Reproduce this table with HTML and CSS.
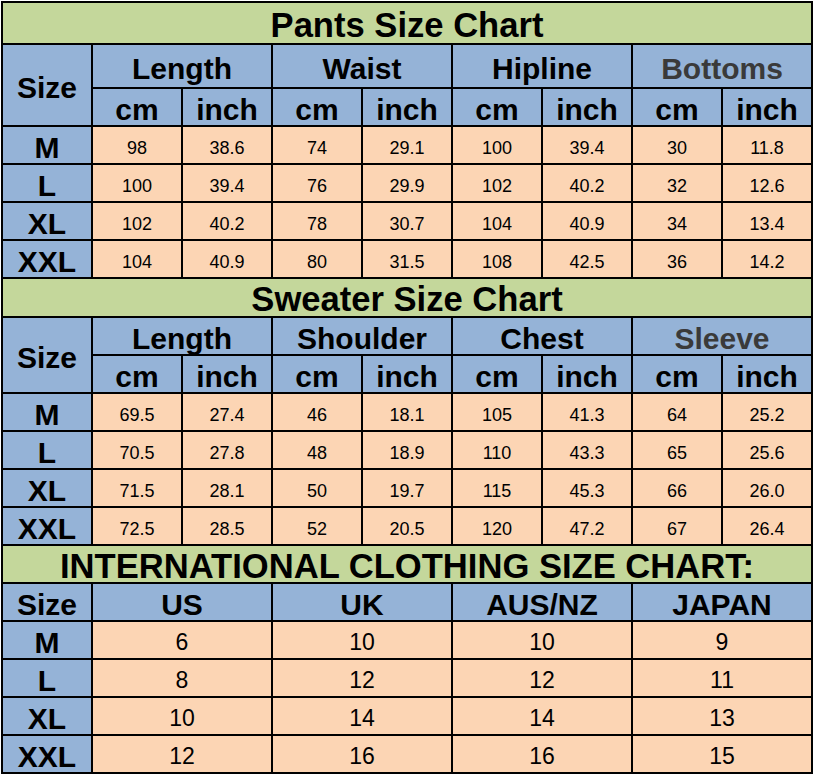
FILE: index.html
```html
<!DOCTYPE html>
<html>
<head>
<meta charset="utf-8">
<link rel="stylesheet" href="styles.css">
<title>Size Chart</title>
</head>
<body>
<div class="chart">
  <div class="c title">Pants Size Chart</div>
  <div class="c hd r2">Size</div>
  <div class="c hd s2">Length</div>
  <div class="c hd s2">Waist</div>
  <div class="c hd s2">Hipline</div>
  <div class="c hd s2 grey">Bottoms</div>
  <div class="c hd">cm</div><div class="c hd">inch</div>
  <div class="c hd">cm</div><div class="c hd">inch</div>
  <div class="c hd">cm</div><div class="c hd">inch</div>
  <div class="c hd">cm</div><div class="c hd">inch</div>

  <div class="c hd">M</div><div class="c d">98</div><div class="c d">38.6</div><div class="c d">74</div><div class="c d">29.1</div><div class="c d">100</div><div class="c d">39.4</div><div class="c d">30</div><div class="c d">11.8</div>
  <div class="c hd">L</div><div class="c d">100</div><div class="c d">39.4</div><div class="c d">76</div><div class="c d">29.9</div><div class="c d">102</div><div class="c d">40.2</div><div class="c d">32</div><div class="c d">12.6</div>
  <div class="c hd">XL</div><div class="c d">102</div><div class="c d">40.2</div><div class="c d">78</div><div class="c d">30.7</div><div class="c d">104</div><div class="c d">40.9</div><div class="c d">34</div><div class="c d">13.4</div>
  <div class="c hd">XXL</div><div class="c d">104</div><div class="c d">40.9</div><div class="c d">80</div><div class="c d">31.5</div><div class="c d">108</div><div class="c d">42.5</div><div class="c d">36</div><div class="c d">14.2</div>

  <div class="c title">Sweater Size Chart</div>
  <div class="c hd r2">Size</div>
  <div class="c hd s2">Length</div>
  <div class="c hd s2">Shoulder</div>
  <div class="c hd s2">Chest</div>
  <div class="c hd s2 grey">Sleeve</div>
  <div class="c hd">cm</div><div class="c hd">inch</div>
  <div class="c hd">cm</div><div class="c hd">inch</div>
  <div class="c hd">cm</div><div class="c hd">inch</div>
  <div class="c hd">cm</div><div class="c hd">inch</div>

  <div class="c hd">M</div><div class="c d">69.5</div><div class="c d">27.4</div><div class="c d">46</div><div class="c d">18.1</div><div class="c d">105</div><div class="c d">41.3</div><div class="c d">64</div><div class="c d">25.2</div>
  <div class="c hd">L</div><div class="c d">70.5</div><div class="c d">27.8</div><div class="c d">48</div><div class="c d">18.9</div><div class="c d">110</div><div class="c d">43.3</div><div class="c d">65</div><div class="c d">25.6</div>
  <div class="c hd">XL</div><div class="c d">71.5</div><div class="c d">28.1</div><div class="c d">50</div><div class="c d">19.7</div><div class="c d">115</div><div class="c d">45.3</div><div class="c d">66</div><div class="c d">26.0</div>
  <div class="c hd">XXL</div><div class="c d">72.5</div><div class="c d">28.5</div><div class="c d">52</div><div class="c d">20.5</div><div class="c d">120</div><div class="c d">47.2</div><div class="c d">67</div><div class="c d">26.4</div>

  <div class="c title">INTERNATIONAL CLOTHING SIZE CHART:</div>
  <div class="c hd">Size</div>
  <div class="c hd s2">US</div>
  <div class="c hd s2">UK</div>
  <div class="c hd s2">AUS/NZ</div>
  <div class="c hd s2">JAPAN</div>

  <div class="c hd">M</div><div class="c d big s2">6</div><div class="c d big s2">10</div><div class="c d big s2">10</div><div class="c d big s2">9</div>
  <div class="c hd">L</div><div class="c d big s2">8</div><div class="c d big s2">12</div><div class="c d big s2">12</div><div class="c d big s2">11</div>
  <div class="c hd">XL</div><div class="c d big s2">10</div><div class="c d big s2">14</div><div class="c d big s2">14</div><div class="c d big s2">13</div>
  <div class="c hd">XXL</div><div class="c d big s2">12</div><div class="c d big s2">16</div><div class="c d big s2">16</div><div class="c d big s2">15</div>
</div>
</body>
</html>
```

FILE: styles.css
```css
html, body {
  margin: 0;
  padding: 0;
  background: #ffffff;
}
body {
  padding: 1px 0 0 1px;
  font-family: "Liberation Sans", Arial, sans-serif;
  color: #000;
}
.chart {
  display: grid;
  width: 812px;
  box-sizing: border-box;
  background: #000;
  padding: 2px;
  gap: 2px;
  grid-template-columns: repeat(9, 88px);
  grid-template-rows: 40px 42px 36px 36px 36px 36px 36px 37px 36px 36px 36px 36px 36px 36px 36px 36px 36px 36px 36px 36px;
}
.c {
  display: flex;
  align-items: center;
  justify-content: center;
  white-space: nowrap;
  line-height: 1;
  box-sizing: border-box;
  padding-top: 5px;
}
.title {
  grid-column: span 9;
  background: #c4d79b;
  font-weight: bold;
  font-size: 34.6px;
  padding-top: 4px;
}
.hd {
  background: #95b3d7;
  font-weight: bold;
  font-size: 30px;
}
.grey {
  color: #3a3a3a;
}
.s2 {
  grid-column: span 2;
}
.r2 {
  grid-row: span 2;
}
.d {
  background: #fcd5b4;
  font-size: 18px;
}
.d.big {
  font-size: 23px;
}
```
